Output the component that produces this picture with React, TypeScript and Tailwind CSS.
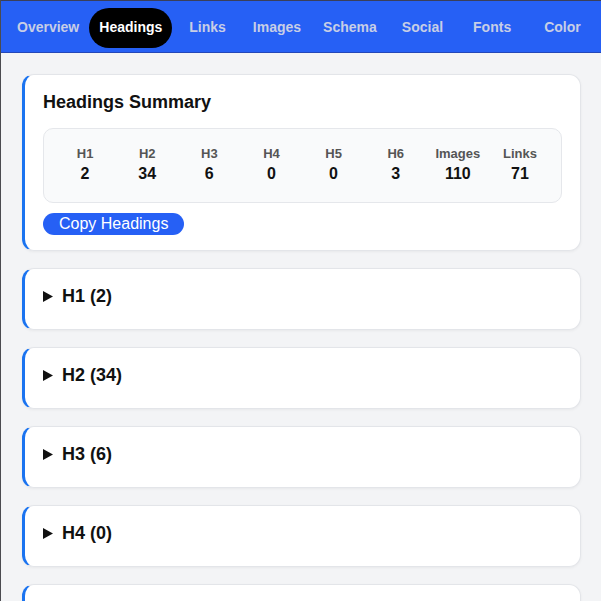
import React from "react";

const tabs: [string, string][] = [
  ["Overview", "ml-[6px]"],
  ["Headings", "ml-0"],
  ["Links", "ml-[7px]"],
  ["Images", "ml-[7px]"],
  ["Schema", "ml-[2px]"],
  ["Social", "ml-[5px]"],
  ["Fonts", "ml-[10px]"],
  ["Color", "ml-[13px]"],
];
const stats = [
  ["H1", "2"],
  ["H2", "34"],
  ["H3", "6"],
  ["H4", "0"],
  ["H5", "0"],
  ["H6", "3"],
  ["Images", "110"],
  ["Links", "71"],
];
const sections = ["H1 (2)", "H2 (34)", "H3 (6)", "H4 (0)", "H5 (0)"];

export default function App() {
  return (
    <div
      className="w-[601px] h-[601px] overflow-hidden bg-[#f3f4f6] border-l border-[#4b4b50] flex flex-col"
      style={{ fontFamily: '"Liberation Sans", Arial, sans-serif' }}
    >
      <nav className="h-[53px] shrink-0 bg-[#2660f5] border-t border-[#3a3f5a] border-b border-b-[#2447b8] flex items-center pt-[2px]">
        {tabs.map(([t, m]) => (
          <div
            key={t}
            className={
              t === "Headings"
                ? `${m} h-[40px] px-[10px] rounded-full bg-black text-white font-bold text-[14px] flex items-center`
                : `${m} h-[40px] px-[10px] text-[#c7cee6] font-bold text-[14px] flex items-center`
            }
          >
            {t}
          </div>
        ))}
      </nav>
      <main className="flex flex-col gap-[17px] pt-[21px] pl-[21px] pr-[20px]">
        <section className="bg-white rounded-[12px] border border-[#e3e5e9] border-l-[3px] border-l-[#1a73f0] shadow-[0_1px_3px_rgba(0,0,0,0.05)] pt-[16px] pb-[15px] pl-[18px] pr-[18px] shrink-0">
          <h2 className="text-[18px] font-bold text-[#111] leading-[22px]">Headings Summary</h2>
          <div className="mt-[15px] bg-[#f9fafb] border border-[#e5e7eb] rounded-[10px] h-[75px] px-[10px] pb-[2px] grid grid-cols-8 items-center">
            {stats.map(([l, v]) => (
              <div key={l} className="flex flex-col items-center">
                <span className="text-[13px] font-bold text-[#555] leading-[16px]">{l}</span>
                <span className="text-[16px] font-bold text-[#111] leading-[20px] mt-[2px]">{v}</span>
              </div>
            ))}
          </div>
          <button className="mt-[10px] h-[22px] px-[16px] rounded-full bg-[#2660f5] text-white text-[16px] leading-[20px] flex items-center">
            Copy Headings
          </button>
        </section>
        {sections.map((s) => (
          <section
            key={s}
            className="bg-white rounded-[12px] border border-[#e3e5e9] border-l-[3px] border-l-[#1a73f0] shadow-[0_1px_3px_rgba(0,0,0,0.05)] h-[62px] shrink-0 pl-[18px] pt-[16px]"
          >
            <div className="flex items-center gap-[9px]">
              <svg width="10" height="11" viewBox="0 0 10 11">
                <path d="M0 0 L10 5.5 L0 11 Z" fill="#111" />
              </svg>
              <span className="text-[18px] font-bold text-[#111] leading-[22px]">{s}</span>
            </div>
          </section>
        ))}
      </main>
    </div>
  );
}
